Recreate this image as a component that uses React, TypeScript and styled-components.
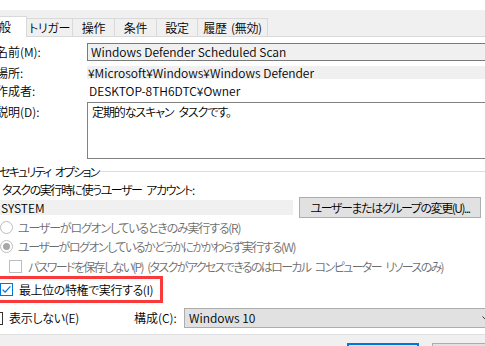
import React from "react";
import styled, { createGlobalStyle } from "styled-components";

const Global = createGlobalStyle`
  html, body { margin: 0; padding: 0; background: #ffffff; overflow: hidden; }
  body { width: 485px; height: 346px; }
  #root { width: 485px; height: 346px; overflow: hidden; }
`;

const Dialog = styled.div`
  width: 525px;
  margin-left: -14px;
  font-family: "Noto Sans CJK JP", "Noto Sans", sans-serif;
  font-size: 12px;
  font-weight: 350;
  line-height: 16px;
  font-feature-settings: "palt";
  color: #000;
  background: #f0f0f0;
  display: flex;
  flex-direction: column;
`;

const TopBand = styled.div`
  height: 10px;
  background: #ffffff;
`;

const TabStrip = styled.div`
  height: 27px;
  display: flex;
  align-items: flex-end;
  background: #f0f0f0;
`;

const Tab = styled.div<{ $w: number; $active?: boolean }>`
  box-sizing: border-box;
  flex: 0 0 ${(p) => p.$w}px;
  height: ${(p) => (p.$active ? 21 : 19)}px;
  display: flex;
  align-items: center;
  justify-content: center;
  padding-top: ${(p) => (p.$active ? 0 : 1)}px;
  padding-right: ${(p) => (p.$active ? 14 : 0)}px;
  background: ${(p) => (p.$active ? "#ffffff" : "#f0f0f0")};
  border-top: 1px solid #d9d9d9;
  border-right: 1px solid #d9d9d9;
  border-bottom: ${(p) => (p.$active ? "none" : "1px solid #d9d9d9")};
  white-space: nowrap;
  letter-spacing: -0.3px;
  word-spacing: 2px;
`;

const TabFiller = styled.div`
  flex: 1;
  height: 1px;
  background: #d9d9d9;
`;

const Panel = styled.div`
  background: #ffffff;
  height: 298px;
  padding-right: 14px;
  display: flex;
  flex-direction: column;
  border-bottom: 1px solid #dfdfdf;
  box-sizing: border-box;
`;

const Row = styled.div<{ $top: number; $h: number; $indent: number; $gap?: number }>`
  display: flex;
  align-items: center;
  flex: 0 0 ${(p) => p.$h}px;
  height: ${(p) => p.$h}px;
  min-height: 0;
  margin-top: ${(p) => p.$top}px;
  padding-left: ${(p) => p.$indent}px;
  gap: ${(p) => p.$gap ?? 0}px;
  white-space: nowrap;
`;

const TopRow = styled(Row)`
  align-items: flex-start;
`;

const Txt = styled.span<{ $ls?: number; $dim?: boolean }>`
  letter-spacing: ${(p) => p.$ls ?? 0}px;
  word-spacing: ${(p) => (p.$ls ? 3.5 : 0)}px;
  color: ${(p) => (p.$dim ? "#6d6d6d" : "inherit")};
`;

const Label = styled.div<{ $padTop?: number }>`
  flex: 0 0 91px;
  padding-top: ${(p) => p.$padTop ?? 0}px;
`;

const NameBox = styled.div`
  flex: 1;
  box-sizing: border-box;
  height: 18px;
  border: 1px solid #7a7a7a;
  background: #f0f0f0;
  padding-left: 3px;
  display: flex;
  align-items: center;
`;

const ReadOnlyValue = styled.div<{ $pad: number }>`
  flex: 1;
  height: 13px;
  background: #f0f0f0;
  padding-left: ${(p) => p.$pad}px;
  display: flex;
  align-items: center;
`;

const PlainValue = styled.div`
  flex: 1;
  padding-left: 2px;
`;

const DescBox = styled.div`
  flex: 1;
  box-sizing: border-box;
  height: 57px;
  border: 1px solid #828282;
  background: #ffffff;
  padding: 1px 0 0 4px;
`;

const SectionLine = styled.div`
  flex: 1;
  height: 1px;
  background: #dcdcdc;
  margin-left: 2px;
  margin-top: -2px;
`;

const SystemBox = styled.div`
  flex: 0 0 294px;
  box-sizing: border-box;
  height: 15px;
  background: #f0f0f0;
  padding-left: 2px;
  display: flex;
  align-items: center;
`;

const WinButton = styled.div<{ $w: number; $default?: boolean }>`
  flex: 0 0 ${(p) => p.$w}px;
  box-sizing: border-box;
  height: ${(p) => (p.$default ? 22 : 21)}px;
  background: #e1e1e1;
  border: ${(p) => (p.$default ? "2px solid #0078d7" : "1px solid #adadad")};
  display: flex;
  align-items: center;
  justify-content: center;
  white-space: nowrap;
`;

const Highlight = styled.div`
  box-sizing: border-box;
  flex: 0 0 27px;
  height: 27px;
  width: 168px;
  margin-top: 2px;
  margin-left: 9px;
  border: 3px solid #fa3a3a;
  padding-left: 2px;
  display: flex;
  align-items: center;
  gap: 6px;
  white-space: nowrap;
`;

const LeftGroup = styled.div`
  flex: 0 0 144px;
  display: flex;
  align-items: center;
  gap: 6px;
`;

const ConfigLabel = styled.div`
  flex: 0 0 50px;
`;

const Combo = styled.div`
  flex: 1;
  box-sizing: border-box;
  height: 20px;
  background: #e1e1e1;
  border: 1px solid #adadad;
  padding: 0 6px 0 4px;
  display: flex;
  align-items: center;
  justify-content: space-between;
`;

const Footer = styled.div`
  height: 11px;
  background: #f0f0f0;
  display: flex;
  align-items: flex-start;
  padding: 8px 0 0 361px;
  gap: 13px;
`;

const Radio = ({ checked }: { checked?: boolean }) => (
  <svg width="13" height="13" viewBox="0 0 13 13" style={{ flex: "0 0 13px" }}>
    <circle cx="6.5" cy="6.5" r="6" fill="#fff" stroke="#bcbcbc" strokeWidth="1" />
    {checked && <circle cx="6.5" cy="6.5" r="3.5" fill="#a8a8a8" />}
  </svg>
);

const CheckBox = ({ color, checked }: { color: string; checked?: boolean }) => (
  <svg width="13" height="13" viewBox="0 0 13 13" style={{ flex: "0 0 13px" }}>
    <rect x="0.5" y="0.5" width="12" height="12" fill="#fff" stroke={color} strokeWidth="1" />
    {checked && (
      <path d="M2.6 6.6 L5.1 9.1 L10.4 3.4" fill="none" stroke={color} strokeWidth="1.3" />
    )}
  </svg>
);

const Chevron = () => (
  <svg width="8" height="5" viewBox="0 0 8 5">
    <path d="M0.5 0.5 L4 4 L7.5 0.5" fill="none" stroke="#333" strokeWidth="1" />
  </svg>
);

export default function App() {
  return (
    <>
      <Global />
      <Dialog>
        <TopBand />
        <TabStrip>
          <Tab $w={41} $active>一般</Tab>
          <Tab $w={46}>トリガー</Tab>
          <Tab $w={42}>操作</Tab>
          <Tab $w={42}>条件</Tab>
          <Tab $w={41}>設定</Tab>
          <Tab $w={70}>履歴 (無効)</Tab>
          <TabFiller />
        </TabStrip>
        <Panel>
          <Row $top={6} $h={18} $indent={10}>
            <Label>名前(M):</Label>
            <NameBox>Windows Defender Scheduled Scan</NameBox>
          </Row>
          <Row $top={5} $h={13} $indent={10}>
            <Label>場所:</Label>
            <ReadOnlyValue $pad={1}>¥Microsoft¥Windows¥Windows Defender</ReadOnlyValue>
          </Row>
          <Row $top={5} $h={14} $indent={10}>
            <Label>作成者:</Label>
            <PlainValue>DESKTOP-8TH6DTC¥Owner</PlainValue>
          </Row>
          <TopRow $top={4} $h={57} $indent={10}>
            <Label $padTop={2}>説明(D):</Label>
            <DescBox>
              <Txt $ls={-1.1}>定期的なスキャン タスクです。</Txt>
            </DescBox>
          </TopRow>
          <Row $top={5} $h={16} $indent={13}>
            <Txt $ls={-1.8}>セキュリティ オプション</Txt>
            <SectionLine />
          </Row>
          <Row $top={3} $h={14} $indent={16}>
            <Txt $ls={-1.45}>タスクの実行時に使うユーザー アカウント:</Txt>
          </Row>
          <Row $top={0} $h={21} $indent={13} $gap={6}>
            <SystemBox>SYSTEM</SystemBox>
            <WinButton $w={182}>
              <Txt $ls={-1.4}>ユーザーまたはグループの変更(U)...</Txt>
            </WinButton>
          </Row>
          <Row $top={2} $h={15} $indent={14} $gap={5}>
            <Radio />
            <Txt $dim $ls={-1.2}>ユーザーがログオンしているときのみ実行する(R)</Txt>
          </Row>
          <Row $top={4} $h={15} $indent={14} $gap={5}>
            <Radio checked />
            <Txt $dim $ls={-1.5}>ユーザーがログオンしているかどうかにかかわらず実行する(W)</Txt>
          </Row>
          <Row $top={5} $h={15} $indent={23} $gap={6}>
            <CheckBox color="#bcbcbc" />
            <Txt $dim $ls={-1.65}>
              パスワードを保存しない(P) (タスクがアクセスできるのはローカル コンピューター リソースのみ)
            </Txt>
          </Row>
          <Highlight>
            <CheckBox color="#0078d7" checked />
            <Txt $ls={-0.4}>最上位の特権で実行する(I)</Txt>
          </Highlight>
          <Row $top={5} $h={20} $indent={4}>
            <LeftGroup>
              <CheckBox color="#333333" />
              <Txt $ls={-0.3}>表示しない(E)</Txt>
            </LeftGroup>
            <ConfigLabel>構成(C):</ConfigLabel>
            <Combo>
              Windows 10
              <Chevron />
            </Combo>
          </Row>
        </Panel>
        <Footer>
          <WinButton $w={72} $default>OK</WinButton>
          <WinButton $w={73}>キャンセル</WinButton>
        </Footer>
      </Dialog>
    </>
  );
}
